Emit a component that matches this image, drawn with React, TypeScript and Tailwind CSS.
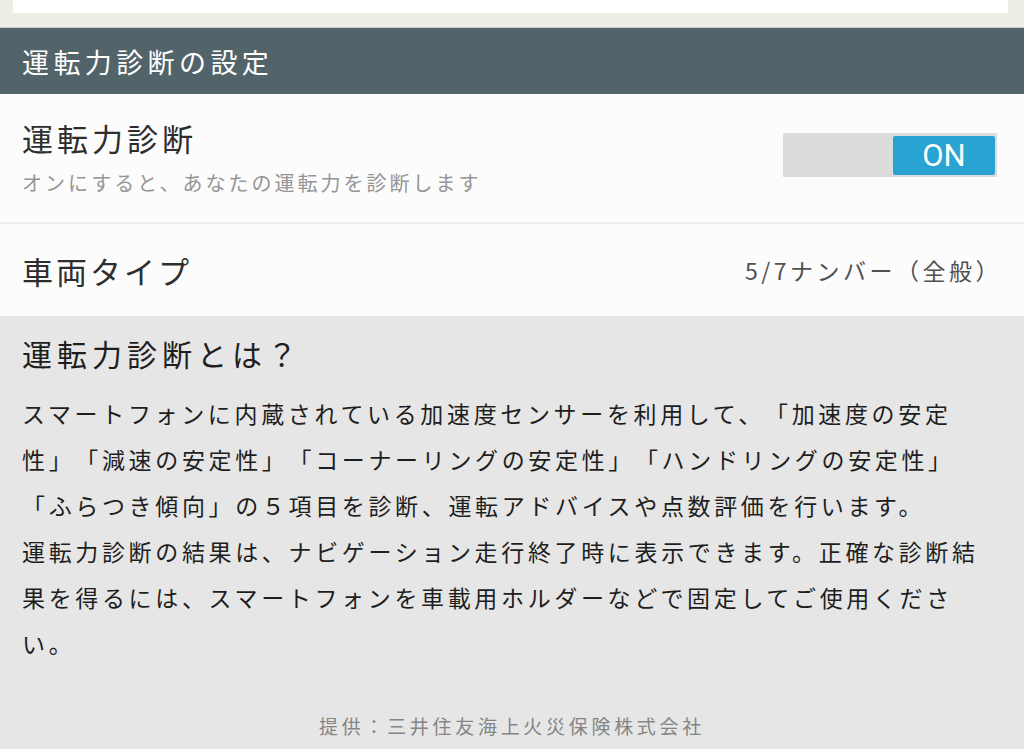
const font = { fontFamily: '"Noto Sans CJK JP", "Noto Sans", sans-serif' }

const bodyLines = [
  'スマートフォンに内蔵されている加速度センサーを利用して、「加速度の安定',
  '性」「減速の安定性」「コーナーリングの安定性」「ハンドリングの安定性」',
  '「ふらつき傾向」の５項目を診断、運転アドバイスや点数評価を行います。',
  '運転力診断の結果は、ナビゲーション走行終了時に表示できます。正確な診断結',
  '果を得るには、スマートフォンを車載用ホルダーなどで固定してご使用くださ',
  'い。',
]

function Toggle() {
  return (
    <div className="w-[214px] h-[44px] bg-[#dcdcdc] flex justify-end items-center pr-[2px]">
      <div className="w-[102px] h-[39px] bg-[#28a3d2] rounded-[2px] flex items-center justify-center">
        <span className="text-white text-[31px] leading-none font-['Roboto',sans-serif]">ON</span>
      </div>
    </div>
  )
}

export default function App() {
  return (
    <div
      className="w-[1024px] h-[749px] overflow-hidden bg-[#e6e6e6] flex flex-col [text-spacing-trim:space-all]"
      style={font}
    >
      {/* top of previous card */}
      <div className="h-[28px] bg-[#eeede6] px-[13px] border-b border-[#c9cfcf] shrink-0">
        <div className="h-[13px] mr-[3px] bg-white" />
      </div>

      <div className="h-[66px] bg-[#52636a] flex items-center pl-[22px] shrink-0">
        <span className="text-white text-[27px] tracking-[4.4px] leading-none">運転力診断の設定</span>
      </div>

      <div className="h-[128px] bg-[#fcfcfc] flex justify-between items-start px-[22px] pr-[27px] shrink-0">
        <div className="flex flex-col pt-[24px]">
          <span className="text-[31px] tracking-[4px] leading-[40px] text-[#2e2e2e]">運転力診断</span>
          <span className="mt-[10px] text-[20px] tracking-[3px] leading-[30px] text-[#959595]">
            オンにすると、あなたの運転力を診断します
          </span>
        </div>
        <div className="mt-[39px]">
          <Toggle />
        </div>
      </div>

      <div className="h-[2px] bg-[#efefe9] shrink-0" />

      <div className="h-[92px] bg-[#fcfcfc] flex justify-between items-center px-[22px] pr-[22px] shrink-0">
        <span className="text-[31px] tracking-[3px] leading-none text-[#2e2e2e]">車両タイプ</span>
        <span className="text-[23px] tracking-[3.5px] leading-none text-[#505050]">5/7ナンバー（全般）</span>
      </div>

      <div className="flex-1 flex flex-col px-[22px] pt-[17px]">
        <div className="text-[30px] tracking-[5px] leading-[40px] text-[#1e1e1e]">運転力診断とは？</div>
        <div className="mt-[17px] text-[23px] tracking-[3.65px] leading-[46px] text-[#1e1e1e]">
          {bodyLines.map((line) => (
            <div key={line} className="whitespace-nowrap">{line}</div>
          ))}
        </div>
        <div className="mt-[45px] text-center text-[19px] tracking-[3.7px] leading-[30px] text-[#858585]">
          提供：三井住友海上火災保険株式会社
        </div>
      </div>
    </div>
  )
}
